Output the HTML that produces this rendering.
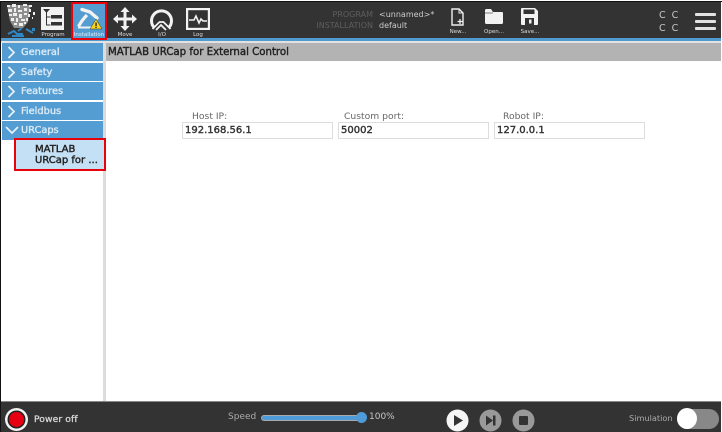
<!DOCTYPE html>
<html><head><meta charset="utf-8">
<style>
html,body{margin:0;padding:0;background:#fff}
#p{position:relative;width:722px;height:432px;overflow:hidden;background:#fff;font-family:"DejaVu Sans","Liberation Sans",sans-serif;filter:blur(.35px)}
#p div{position:absolute;white-space:nowrap}
.bar{left:1px;width:720px;background:#333}
.nav{left:2px;width:101px;height:18px;background:#549dd2;color:#dceaf5;font-size:9.8px;line-height:20px;-webkit-text-stroke:.35px #dceaf5}
.nav span{position:absolute;left:19px;top:0}
.nav svg{position:absolute;left:5px;top:3px}
.ic{font-size:5.5px;color:#ddd;text-align:center;line-height:6px}
.lbl{font-size:9.2px;color:#666;line-height:12px}
.inp{background:#fff;border:1px solid #ddd;box-sizing:border-box;height:17px;font-size:10px;color:#333;line-height:15px;padding-left:2px;-webkit-text-stroke:.4px #333}
</style></head><body>
<div id="p">
<div style="left:0;top:0;width:1px;height:432px;background:#111"></div>
<div style="left:721px;top:0;width:1px;height:432px;background:#fff"></div>
<div style="left:0;top:0;width:722px;height:1px;background:#fff"></div>
<div style="left:0;top:1px;width:722px;height:1px;background:#111"></div>
<div class="bar" style="top:2px;height:36px"></div>
<div style="left:1px;top:38px;width:720px;height:3px;background:#4f9bd0"></div>
<div style="left:1px;top:41px;width:720px;height:2px;background:#e2e2e2"></div>

<!-- logo speckle -->
<svg style="position:absolute;left:4px;top:3px" width="34" height="35" viewBox="0 0 34 35">
<path d="M3 2h24l-2 8-1 9-5 6H10L6 18z" fill="#8e8e8e"/>
<g fill="#eee">
<rect x="3" y="2" width="3" height="2"/><rect x="8" y="1" width="4" height="3"/><rect x="14" y="2" width="2" height="3"/><rect x="19" y="1" width="4" height="2"/><rect x="25" y="2" width="3" height="2"/>
<rect x="4" y="6" width="4" height="3"/><rect x="10" y="5" width="2" height="4"/><rect x="14" y="7" width="4" height="2"/><rect x="20" y="5" width="3" height="3"/><rect x="25" y="6" width="2" height="3"/>
<rect x="5" y="11" width="3" height="2"/><rect x="9" y="10" width="4" height="3"/><rect x="15" y="11" width="3" height="4"/><rect x="20" y="10" width="3" height="2"/><rect x="24" y="11" width="2" height="3"/>
<rect x="7" y="15" width="3" height="3"/><rect x="12" y="15" width="2" height="4"/><rect x="17" y="16" width="4" height="2"/><rect x="22" y="15" width="2" height="3"/>
<rect x="10" y="20" width="3" height="2"/><rect x="15" y="20" width="4" height="3"/><rect x="20" y="19" width="2" height="2"/><rect x="29" y="9" width="2" height="3"/><rect x="28" y="14" width="1" height="2"/>
</g>
<path d="M4 31l6-3 3 3h6M14 28l4-3M22 26l7 4M8 33h12" stroke="#2f86c4" stroke-width="2" fill="none"/>
<rect x="28" y="25" width="3" height="3" fill="#2f86c4"/>
</svg>

<!-- Program -->
<svg style="position:absolute;left:41px;top:7px" width="24" height="24" viewBox="0 0 24 24">
<rect width="23" height="23" fill="#f2f2f2"/>
<path d="M2 2h7l-3.500 4z" fill="#333"/>
<path d="M5.500 5v13h4M5.500 10h4" stroke="#333" stroke-width="1" fill="none"/>
<rect x="10" y="8" width="11" height="3.500" fill="#333"/><rect x="10" y="15" width="11" height="3.500" fill="#333"/>
</svg>
<div class="ic" style="left:36px;top:32px;width:34px">Program</div>

<!-- Installation -->
<div style="left:71px;top:2px;width:36px;height:38px;background:#549dd2;box-sizing:border-box;border:2px solid #e8000b"></div>
<svg style="position:absolute;left:74px;top:6px" width="30" height="26" viewBox="0 0 30 26">
<path d="M4.500 20.500Q8 14 13 9" stroke="#f2f2f2" stroke-width="3.200" fill="none"/>
<path d="M8 3.500L16 6l7 6" stroke="#f2f2f2" stroke-width="3.400" fill="none" stroke-linecap="round"/>
<path d="M4 21.500h13" stroke="#f2f2f2" stroke-width="2"/>
<path d="M22 13l6 10H16z" fill="#f6d21c" stroke="#333" stroke-width=".5"/>
<rect x="21.400" y="16.500" width="1.300" height="3.500" fill="#222"/><rect x="21.400" y="20.700" width="1.300" height="1.300" fill="#222"/>
</svg>
<div class="ic" style="left:71px;top:32px;width:36px;color:#e4eef6">Installation</div>

<!-- Move -->
<svg style="position:absolute;left:113px;top:7px" width="24" height="24" viewBox="0 0 24 24">
<path d="M12 0l4.500 5h-3v5.500H19v-3l5 4.500-5 4.500v-3h-5.500V19h3L12 24l-4.500-5h3v-5.500H5v3L0 12l5-4.500v3h5.500V5h-3z" fill="#f2f2f2"/>
</svg>
<div class="ic" style="left:108px;top:32px;width:34px">Move</div>

<!-- IO -->
<svg style="position:absolute;left:149px;top:7px" width="25" height="24" viewBox="0 0 25 24">
<path d="M5.500 21A10 10 0 1 1 19.500 21" stroke="#f2f2f2" stroke-width="3" fill="none"/>
<path d="M3.500 22l7-7h4l7 7M7 23l5-5 5 5" stroke="#f2f2f2" stroke-width="1.800" fill="none"/>
</svg>
<div class="ic" style="left:145px;top:32px;width:34px">I/O</div>

<!-- Log -->
<svg style="position:absolute;left:186px;top:8px" width="24" height="22" viewBox="0 0 24 22">
<rect x="1" y="1" width="22" height="20" fill="none" stroke="#f2f2f2" stroke-width="2.400"/>
<path d="M3 12h5l2-4 3 7 2-4 2 2h4" stroke="#f2f2f2" stroke-width="1.600" fill="none"/>
</svg>
<div class="ic" style="left:181px;top:32px;width:34px">Log</div>

<!-- Program info -->
<div style="left:300px;top:10px;width:73px;text-align:right;font-size:8px;line-height:10px;color:#5e5e5e">PROGRAM</div>
<div style="left:300px;top:21px;width:73px;text-align:right;font-size:8px;line-height:10px;color:#5e5e5e">INSTALLATION</div>
<div style="left:379px;top:10px;font-size:8px;line-height:10px;color:#ccc">&lt;unnamed&gt;*</div>
<div style="left:379px;top:21px;font-size:8px;line-height:10px;color:#ccc">default</div>

<!-- New -->
<svg style="position:absolute;left:451px;top:8px" width="14" height="18" viewBox="0 0 14 18">
<path d="M1 1h7l4 4v12H1z" fill="#333" stroke="#eee" stroke-width="1.400"/>
<path d="M8 1v4h4" fill="none" stroke="#eee" stroke-width="1"/>
<path d="M9 11v5M6.500 13.500h5" stroke="#eee" stroke-width="1.300"/>
</svg>
<div class="ic" style="left:443px;top:29px;width:30px">New...</div>
<!-- Open -->
<svg style="position:absolute;left:485px;top:9px" width="18" height="15" viewBox="0 0 18 15">
<path d="M0 1.500Q0 0 1.500 0H6l2 3h9q1 0 1 1v9.500q0 1.500-1.500 1.500h-15Q0 15 0 13.500z" fill="#f2f2f2"/>
<path d="M0 4h8" stroke="#333" stroke-width=".6"/>
</svg>
<div class="ic" style="left:479px;top:29px;width:30px">Open...</div>
<!-- Save -->
<svg style="position:absolute;left:521px;top:8px" width="17" height="17" viewBox="0 0 17 17">
<path d="M0 1q0-1 1-1h13l3 3v13q0 1-1 1H1q-1 0-1-1z" fill="#f2f2f2"/>
<rect x="2.500" y="1.500" width="11" height="4.500" fill="#333"/>
<rect x="4" y="10" width="9" height="7" fill="#333"/><rect x="8" y="11.500" width="2.500" height="4" fill="#f2f2f2"/>
</svg>
<div class="ic" style="left:515px;top:29px;width:30px">Save...</div>

<!-- CC CC -->
<div style="left:659px;top:9px;font-size:9.500px;line-height:13px;color:#c8c8c8;white-space:pre">C  C</div>
<div style="left:659px;top:22px;font-size:9.500px;line-height:13px;color:#c8c8c8;white-space:pre">C  C</div>
<!-- Hamburger -->
<div style="left:695px;top:13px;width:21px;height:3px;background:#e2e2e2;border-radius:1px"></div>
<div style="left:695px;top:20px;width:21px;height:3px;background:#e2e2e2;border-radius:1px"></div>
<div style="left:695px;top:27px;width:21px;height:3px;background:#e2e2e2;border-radius:1px"></div>

<!-- Sidebar -->
<div style="left:1px;top:43px;width:102px;height:358px;background:#fff"></div>
<div style="left:103px;top:43px;width:3px;height:358px;background:#dcdcdc"></div>
<div class="nav" style="top:43px"><svg width="10" height="13" viewBox="0 0 10 13"><path d="M1.500 1l5.500 5.500L1.500 12" stroke="#e6f0f8" stroke-width="1.800" fill="none"/></svg><span>General</span></div>
<div class="nav" style="top:63px"><svg width="10" height="13" viewBox="0 0 10 13"><path d="M1.500 1l5.500 5.500L1.500 12" stroke="#e6f0f8" stroke-width="1.800" fill="none"/></svg><span>Safety</span></div>
<div class="nav" style="top:82px"><svg width="10" height="13" viewBox="0 0 10 13"><path d="M1.500 1l5.500 5.500L1.500 12" stroke="#e6f0f8" stroke-width="1.800" fill="none"/></svg><span>Features</span></div>
<div class="nav" style="top:102px"><svg width="10" height="13" viewBox="0 0 10 13"><path d="M1.500 1l5.500 5.500L1.500 12" stroke="#e6f0f8" stroke-width="1.800" fill="none"/></svg><span>Fieldbus</span></div>
<div class="nav" style="top:121px;height:19px"><svg width="14" height="12" viewBox="0 0 14 12" style="left:3px;top:4px"><path d="M1 2l6 6 6-6" stroke="#e6f0f8" stroke-width="1.800" fill="none"/></svg><span>URCaps</span></div>
<div style="left:14px;top:138px;width:92px;height:33px;box-sizing:border-box;border:2px solid #e8000b;background:#c4e0f5"></div>
<div style="left:35px;top:144px;font-size:10px;line-height:11px;color:#222;-webkit-text-stroke:.4px #222;white-space:pre">MATLAB
URCap for ...</div>

<!-- Header -->
<div style="left:106px;top:43px;width:615px;height:18px;background:#b3b3b3;color:#222;font-size:10.200px;-webkit-text-stroke:.4px #222;line-height:20px;padding-left:2px;box-sizing:border-box">MATLAB URCap for External Control</div>

<!-- Fields -->
<div class="lbl" style="left:192px;top:111px">Host IP:</div>
<div class="lbl" style="left:344px;top:111px">Custom port:</div>
<div class="lbl" style="left:503px;top:111px">Robot IP:</div>
<div class="inp" style="left:182px;top:122px;width:151px">192.168.56.1</div>
<div class="inp" style="left:338px;top:122px;width:151px">50002</div>
<div class="inp" style="left:494px;top:122px;width:151px">127.0.0.1</div>

<!-- Footer -->
<div style="left:1px;top:401px;width:720px;height:1px;background:#888"></div>
<div class="bar" style="top:402px;height:30px"></div>
<div style="left:5px;top:408px;width:23px;height:23px;border-radius:50%;background:#f2f2f2"></div>
<div style="left:9px;top:412px;width:15px;height:15px;border-radius:50%;background:#e60012;box-shadow:0 0 0 1.500px #222"></div>
<div style="left:34px;top:414px;font-size:9.200px;line-height:11px;letter-spacing:.1px;color:#d6d6d6;-webkit-text-stroke:.3px #d6d6d6">Power off</div>
<div style="left:228px;top:412px;font-size:9px;line-height:11px;color:#aaa">Speed</div>
<div style="left:262px;top:416px;width:103px;height:4px;border-radius:2px;background:#4f9bd8;box-shadow:0 0 0 1px #aaa"></div>
<div style="left:356px;top:412px;width:11px;height:11px;border-radius:50%;background:#4f9bd8"></div>
<div style="left:369px;top:412px;font-size:9px;line-height:11px;color:#c8c8c8">100%</div>
<svg style="position:absolute;left:446px;top:409px" width="23" height="23" viewBox="0 0 23 23"><circle cx="11.500" cy="11.500" r="11" fill="#f5f5f5"/><path d="M8 6l9 5.500L8 17z" fill="#333"/></svg>
<svg style="position:absolute;left:479px;top:409px" width="23" height="23" viewBox="0 0 23 23"><circle cx="11.500" cy="11.500" r="11" fill="#999"/><path d="M7 6.500l7 5-7 5z" fill="#333"/><rect x="14" y="6.500" width="2.500" height="10" fill="#333"/></svg>
<svg style="position:absolute;left:512px;top:409px" width="23" height="23" viewBox="0 0 23 23"><circle cx="11.500" cy="11.500" r="11" fill="#999"/><rect x="7" y="7" width="9" height="9" rx="1" fill="#333"/></svg>
<div style="left:629px;top:413px;font-size:8.200px;line-height:11px;color:#aaa">Simulation</div>
<div style="left:677px;top:409px;width:42px;height:20px;border-radius:10px;background:#888"></div>
<div style="left:677px;top:408px;width:20px;height:21px;border-radius:50%;background:#fff"></div>
</div>
</body></html>
